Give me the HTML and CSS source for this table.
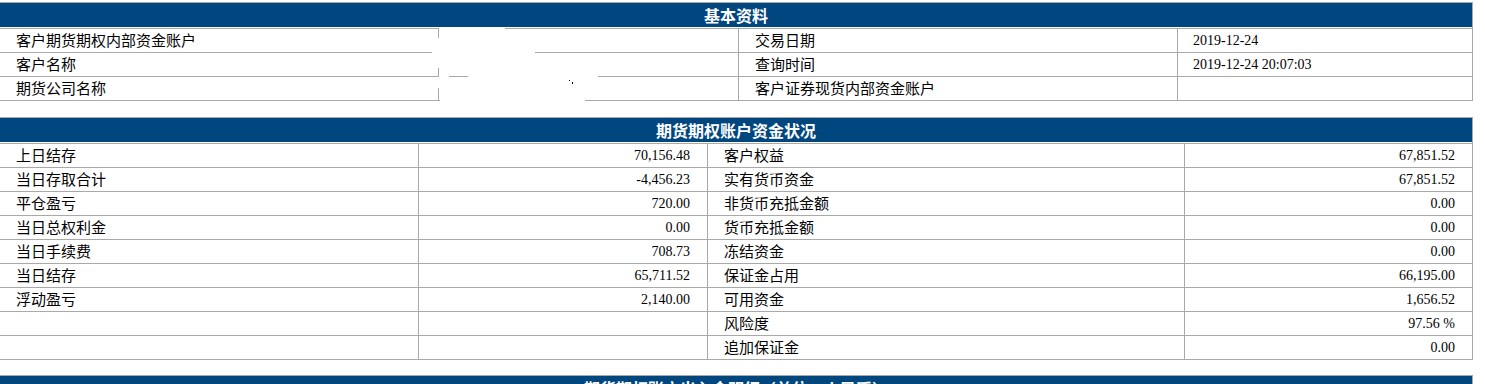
FILE: index.html
```html
<!DOCTYPE html>
<html lang="zh-CN">
<head>
<meta charset="utf-8">
<title>期货期权账户</title>
<link rel="stylesheet" href="styles.css">
</head>
<body>
<div class="sheet">
  <section class="panel basic">
    <div class="panel-head">基本资料</div>
    <div class="row">
      <div class="cell label">客户期货期权内部资金账户</div>
      <div class="cell"></div>
      <div class="cell label">交易日期</div>
      <div class="cell num left">2019-12-24</div>
    </div>
    <div class="row">
      <div class="cell label">客户名称</div>
      <div class="cell"></div>
      <div class="cell label">查询时间</div>
      <div class="cell num left">2019-12-24 20:07:03</div>
    </div>
    <div class="row last">
      <div class="cell label">期货公司名称</div>
      <div class="cell"></div>
      <div class="cell label">客户证券现货内部资金账户</div>
      <div class="cell num left"></div>
    </div>
    <span class="mask m1"></span>
    <span class="mask m2"></span>
    <span class="mask m3"></span>
    <span class="mask m3b"></span>
    <span class="mask m4"></span>
    <span class="mask m5"></span>
    <span class="speck s1"></span>
    <span class="speck s2"></span>
  </section>

  <section class="panel funds">
    <div class="panel-head">期货期权账户资金状况</div>
    <div class="row"><div class="cell label">上日结存</div><div class="cell num">70,156.48</div><div class="cell label">客户权益</div><div class="cell num">67,851.52</div></div>
    <div class="row"><div class="cell label">当日存取合计</div><div class="cell num">-4,456.23</div><div class="cell label">实有货币资金</div><div class="cell num">67,851.52</div></div>
    <div class="row"><div class="cell label">平仓盈亏</div><div class="cell num">720.00</div><div class="cell label">非货币充抵金额</div><div class="cell num">0.00</div></div>
    <div class="row"><div class="cell label">当日总权利金</div><div class="cell num">0.00</div><div class="cell label">货币充抵金额</div><div class="cell num">0.00</div></div>
    <div class="row"><div class="cell label">当日手续费</div><div class="cell num">708.73</div><div class="cell label">冻结资金</div><div class="cell num">0.00</div></div>
    <div class="row"><div class="cell label">当日结存</div><div class="cell num">65,711.52</div><div class="cell label">保证金占用</div><div class="cell num">66,195.00</div></div>
    <div class="row"><div class="cell label">浮动盈亏</div><div class="cell num">2,140.00</div><div class="cell label">可用资金</div><div class="cell num">1,656.52</div></div>
    <div class="row"><div class="cell label"></div><div class="cell num"></div><div class="cell label">风险度</div><div class="cell num">97.56 %</div></div>
    <div class="row last"><div class="cell label"></div><div class="cell num"></div><div class="cell label">追加保证金</div><div class="cell num">0.00</div></div>
  </section>

  <section class="panel flows">
    <div class="panel-head">期货期权账户出入金明细（单位：人民币）</div>
  </section>
</div>
</body>
</html>
```
FILE: styles.css
```css
html, body {
  margin: 0;
  padding: 0;
  background: #ffffff;
}

body {
  padding-top: 2px;
  color: #000000;
  font-family: "Liberation Serif", "Noto Sans CJK SC", serif;
  overflow: hidden;
}

.sheet {
  display: flex;
  flex-direction: column;
  gap: 16px;
}

.panel {
  position: relative;
  width: 1473px;
  box-sizing: border-box;
  border-top: 1px solid #a9a9a9;
  border-right: 1px solid #a9a9a9;
}

.funds {
  margin-bottom: -1px;
}

.panel-head {
  height: 24px;
  line-height: 24px;
  background: #00467f;
  color: #ffffff;
  text-align: center;
  font-family: "Noto Sans CJK SC", sans-serif;
  font-weight: bold;
  font-size: 16px;
  border-bottom: 1px solid #ffffff;
}

.row {
  display: grid;
  height: 24px;
  box-sizing: border-box;
  border-top: 1px solid #a9a9a9;
}

.row.last {
  height: 25px;
  border-bottom: 1px solid #a9a9a9;
}

.basic .row {
  grid-template-columns: 438px 300px 439px 295px;
}

.funds .row {
  grid-template-columns: 418px 289px 477px 288px;
}

.cell {
  display: flex;
  align-items: center;
  padding: 0 17px 0 16px;
  box-sizing: border-box;
  border-left: 1px solid #a9a9a9;
  overflow: hidden;
  white-space: nowrap;
}

.cell:first-child {
  border-left: none;
}

.label {
  font-family: "Noto Sans CJK SC", sans-serif;
  font-size: 15px;
  padding-bottom: 2px;
}

.num {
  justify-content: flex-end;
  font-family: "Liberation Serif", serif;
  font-size: 14px;
}

.num.left {
  justify-content: flex-start;
  padding-left: 15px;
}

/* redaction patches laid over the account/name values */
.mask {
  position: absolute;
  background: #ffffff;
}

.m1 { left: 439px; top: 25px; width: 66px; height: 10px; }
.m2 { left: 432px; top: 35px; width: 103px; height: 30px; }
.m3 { left: 438px; top: 74px; width: 11px; height: 11px; }
.m3b { left: 439px; top: 73px; width: 10px; height: 1px; }
.m4 { left: 468px; top: 66px; width: 130px; height: 18px; }
.m5 { left: 440px; top: 87px; width: 145px; height: 11px; }

.speck {
  position: absolute;
  background: #000000;
  width: 1px;
}

.s1 { left: 569px; top: 77px; height: 1px; }
.s2 { left: 572px; top: 79px; height: 2px; }
```
